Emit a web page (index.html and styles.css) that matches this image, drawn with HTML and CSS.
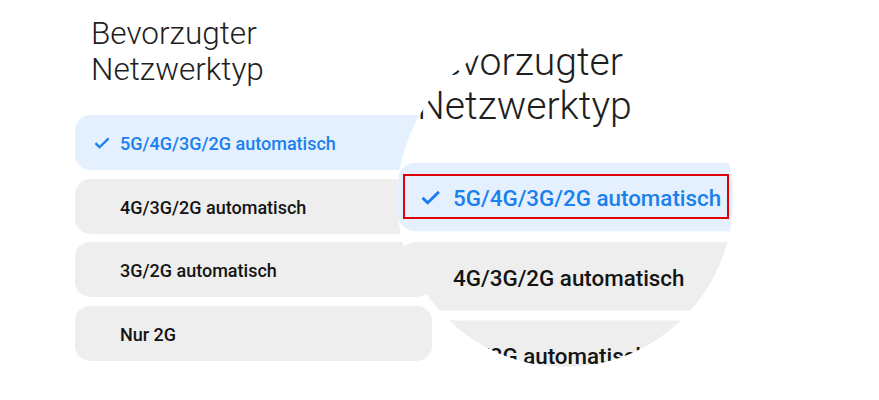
FILE: index.html
```html
<!DOCTYPE html>
<html lang="de">
<head>
<meta charset="utf-8">
<title>Bevorzugter Netzwerktyp</title>
<link rel="stylesheet" href="styles.css">
</head>
<body>
<div class="stage">
  <section class="panel">
    <h1 class="title">Bevorzugter<br>Netzwerktyp</h1>
    <ul class="options">
      <li class="option selected"><svg class="check" viewBox="0 0 16 12" width="16" height="12"><polyline points="1.4,6.2 5.6,10.2 14.6,1.4" fill="none" stroke="currentColor" stroke-width="2.3"/></svg><span>5G/4G/3G/2G automatisch</span></li>
      <li class="option"><span>4G/3G/2G automatisch</span></li>
      <li class="option"><span>3G/2G automatisch</span></li>
      <li class="option"><span>Nur 2G</span></li>
    </ul>
  </section>

  <div class="loupe" aria-hidden="true">
    <section class="panel zoomed">
      <h1 class="title">Bevorzugter<br>Netzwerktyp</h1>
      <ul class="options">
        <li class="option selected"><svg class="check" viewBox="0 0 16 12" width="16" height="12"><polyline points="1.4,6.2 5.6,10.2 14.6,1.4" fill="none" stroke="currentColor" stroke-width="2.3"/></svg><span>5G/4G/3G/2G automatisch</span></li>
        <li class="option"><span>4G/3G/2G automatisch</span></li>
        <li class="option"><span>3G/2G automatisch</span></li>
        <li class="option"><span>Nur 2G</span></li>
      </ul>
    </section>
  </div>
  <div class="highlight"></div>
</div>
</body>
</html>
```
FILE: styles.css
```css
* { box-sizing: border-box; }
html, body { margin: 0; padding: 0; background: #ffffff; }
body { font-family: Roboto, "Noto Sans", sans-serif; }

.stage {
  position: relative;
  width: 879px;
  height: 400px;
  overflow: hidden;
}

.panel {
  width: 879px;
  padding: 16px 0 0 75px;
}

.title {
  margin: 0 0 27px 16px;
  font-weight: 300;
  font-size: 31.5px;
  line-height: 36px;
  color: #1e1e1e;
}

.options {
  list-style: none;
  margin: 0;
  padding: 0;
  display: flex;
  flex-direction: column;
  gap: 8.5px;
  width: 357px;
}

.option {
  position: relative;
  height: 55px;
  border-radius: 15px;
  background: #eeeeee;
  display: flex;
  align-items: center;
  padding: 2px 0 0 45px;
  font-size: 18px;
  font-weight: 500;
  color: #141414;
}

.option.selected {
  background: #e4f0fd;
  color: #1a80ee;
}

.check {
  position: absolute;
  left: 19px;
  top: 22px;
}

.loupe {
  position: absolute;
  left: 397px;
  top: 31px;
  width: 336px;
  height: 336px;
  border-radius: 50%;
  overflow: hidden;
  background: #ffffff;
}

.zoomed {
  position: absolute;
  left: 0;
  top: 0;
  transform-origin: 0 0;
  transform: translate(-93px, -11px) scale(1.242);
}

.highlight {
  position: absolute;
  left: 403px;
  top: 174px;
  width: 326px;
  height: 45px;
  border: 2px solid #e0000a;
}
```
